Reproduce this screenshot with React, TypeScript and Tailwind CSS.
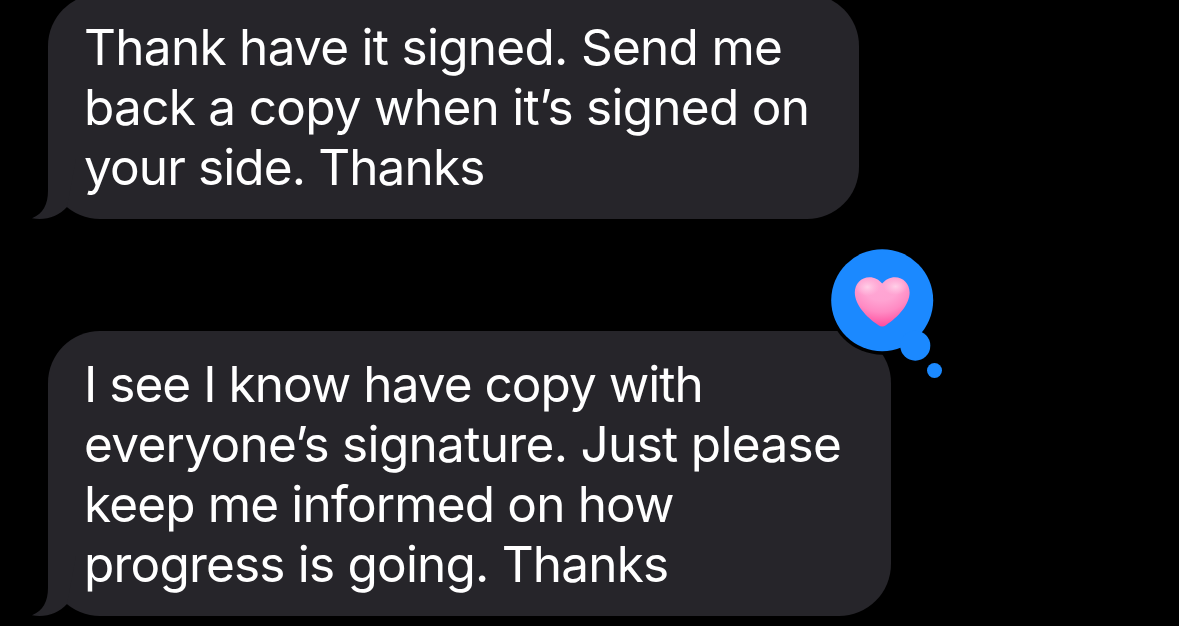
interface Message {
  id: string
  lines: { text: string; className: string }[]
  className: string
  loved?: boolean
}

const messages: Message[] = [
  {
    id: "sign",
    className: "w-[811px]",
    lines: [
      { text: "Thank have it signed. Send me", className: "tracking-[-0.71px]" },
      { text: "back a copy when it’s signed on", className: "tracking-[-0.72px]" },
      { text: "your side. Thanks", className: "tracking-[-0.88px]" },
    ],
  },
  {
    id: "progress",
    className: "w-[843px]",
    loved: true,
    lines: [
      { text: "I see I know have copy with", className: "tracking-[-0.96px]" },
      { text: "everyone’s signature. Just please", className: "tracking-[-0.68px]" },
      { text: "keep me informed on how", className: "tracking-[-0.85px]" },
      { text: "progress is going. Thanks", className: "tracking-[-0.8px]" },
    ],
  },
]

function BubbleTail() {
  return (
    <svg className="absolute bottom-0 -left-4 h-[60px] w-[44px]" viewBox="0 0 44 60" fill="#26252a">
      <path d="M16 0V32C16 45 11 55 0 59.2C13 61.5 26 58 35 48L44 0Z" />
    </svg>
  )
}

// Tapback balloon over the top right corner of a bubble
function LoveReaction() {
  return (
    <svg
      className="absolute -top-[86px] -right-[55px] h-[136px] w-[120px]"
      viewBox="826 245 120 136"
      role="img"
      aria-label="Loved"
    >
      <defs>
        <radialGradient id="heart" gradientUnits="userSpaceOnUse" cx="881" cy="280" r="46">
          <stop offset="0" stopColor="#ffa8d5" />
          <stop offset="0.45" stopColor="#ffa3d2" />
          <stop offset="0.7" stopColor="#ff8ac3" />
          <stop offset="1" stopColor="#ff4f9f" />
        </radialGradient>
        <radialGradient id="shine">
          <stop offset="0" stopColor="#ffd0e8" />
          <stop offset="1" stopColor="#ffc4e2" stopOpacity="0" />
        </radialGradient>
      </defs>
      <circle cx="882.2" cy="300.2" r="54.5" fill="#000" />
      <g fill="#1b89ff">
        <circle cx="882.2" cy="300.2" r="51" />
        <circle cx="915.3" cy="345.7" r="15" />
        <circle cx="934.5" cy="370.5" r="7.5" />
      </g>
      <path
        d="M882.2 283.5C879 279.5 874.5 277.2 869.5 277.2C861 277.2 854.8 283.8 854.8 292.5C854.8 304.5 866 317 878.5 325.2C881 326.8 883.4 326.8 885.9 325.2C898.4 317 909.6 304.5 909.6 292.5C909.6 283.8 903.4 277.2 894.9 277.2C889.9 277.2 885.4 279.5 882.2 283.5Z"
        fill="url(#heart)"
      />
      <ellipse cx="867.5" cy="287" rx="12" ry="9" fill="url(#shine)" />
      <ellipse cx="895.5" cy="286.5" rx="12" ry="8.5" fill="url(#shine)" />
    </svg>
  )
}

function Bubble({ message }: { message: Message }) {
  return (
    <div className={`relative h-fit rounded-[52px] bg-[#26252a] pt-[23px] pr-9 pb-[22px] pl-9 ${message.className}`}>
      <BubbleTail />
      <p className="relative text-[49.5px] leading-[60px] text-white">
        {message.lines.map((line) => (
          <span key={line.text} className={`block whitespace-nowrap ${line.className}`}>
            {line.text}
          </span>
        ))}
      </p>
      {message.loved && <LoveReaction />}
    </div>
  )
}

export default function App() {
  return (
    <main className="flex h-screen flex-col overflow-hidden bg-black font-['Inter',sans-serif]">
      <div className="-mt-1.5 flex flex-col gap-28 pl-12">
        {messages.map((message) => (
          <Bubble key={message.id} message={message} />
        ))}
      </div>
    </main>
  )
}
